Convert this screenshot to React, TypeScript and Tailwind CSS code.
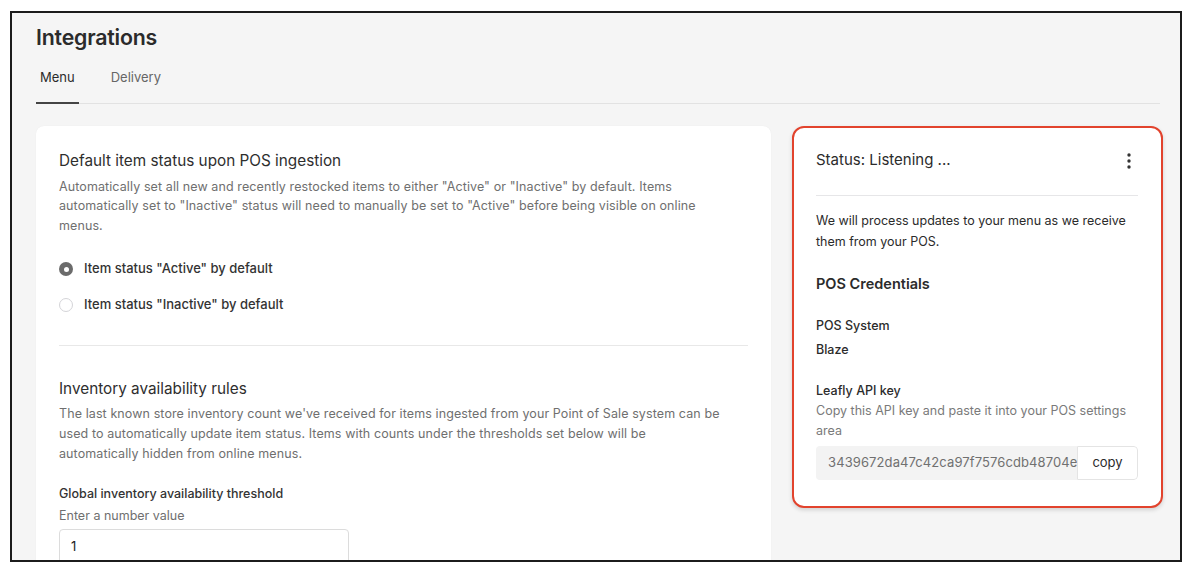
import React from "react";

const font = { fontFamily: "Inter, 'Liberation Sans', sans-serif" };

function Radio({ checked, label }: { checked: boolean; label: string }) {
  return (
    <div className="flex items-center gap-[11px] h-[20px]">
      {checked ? (
        <span className="w-[14px] h-[14px] rounded-full bg-[#6b6b6b] flex items-center justify-center">
          <span className="w-[5px] h-[5px] rounded-full bg-white" />
        </span>
      ) : (
        <span className="w-[14px] h-[14px] rounded-full border border-[#d4d4d8] bg-white" />
      )}
      <span className="text-[13px] font-medium text-[#333]">{label}</span>
    </div>
  );
}

export default function App() {
  return (
    <div className="w-[1190px] h-[574px] bg-white pt-[11px] pl-[10px]" style={font}>
      <div className="w-[1172px] h-[551px] border-2 border-[#1c1c1c] bg-[#f5f5f5] overflow-hidden pl-[24px] pr-[15px]">
        <h1 className="text-[21.3px] font-semibold text-[#2b2b2b] pt-[9px] leading-[30px] tracking-[-0.2px]">Integrations</h1>
        <div className="flex border-b border-[#e2e2e2] mt-[16px] text-[13px] mr-[5px]">
          <div className="px-[4px] pb-[14px] border-b-2 border-[#444] -mb-px text-[#2b2b2b]">Menu</div>
          <div className="pl-[32px] pb-[14px] text-[#666]">Delivery</div>
        </div>
        <div className="flex gap-[21px] mt-[22px] items-start">
          <div className="w-[735px] shrink-0 bg-white rounded-[8px] shadow-[0_0_1px_rgba(0,0,0,0.08)] px-[23px] pt-[23px] h-[500px]">
            <h2 className="text-[15.3px] text-[#2e2e2e] leading-[24px]">Default item status upon POS ingestion</h2>
            <p className="text-[12.5px] text-[#6f6f6f] leading-[19.5px] mt-[4px] tracking-[0.1px] max-w-[665px]">
              Automatically set all new and recently restocked items to either "Active" or "Inactive" by default. Items automatically set to "Inactive" status will need to manually be set to "Active" before being visible on online menus.
            </p>
            <div className="flex flex-col gap-[16px] mt-[24px]">
              <Radio checked label={'Item status "Active" by default'} />
              <Radio checked={false} label={'Item status "Inactive" by default'} />
            </div>
            <div className="border-t border-[#e8e8e8] mt-[30px]" />
            <h2 className="text-[15.3px] text-[#2e2e2e] leading-[24px] mt-[31px]">Inventory availability rules</h2>
            <p className="text-[12.5px] text-[#6f6f6f] leading-[20px] mt-[3px] tracking-[0.1px] max-w-[665px]">
              The last known store inventory count we've received for items ingested from your Point of Sale system can be used to automatically update item status. Items with counts under the thresholds set below will be automatically hidden from online menus.
            </p>
            <div className="text-[12.5px] font-medium text-[#333] mt-[20px] leading-[20px]">Global inventory availability threshold</div>
            <div className="text-[12.5px] text-[#6f6f6f] leading-[20px] mt-[2px]">Enter a number value</div>
            <div className="w-[290px] h-[36px] mt-[3px] border border-[#dcdcdc] rounded-[4px] px-[11px] flex items-center text-[13px] text-[#222]">1</div>
          </div>
          <div className="w-[371px] shrink-0 bg-white rounded-[12px] border-2 border-[#e2432d] shadow-[0_2px_4px_rgba(0,0,0,0.15)] pl-[22px] pr-[23px] pt-[22px] pb-[26px]">
            <div className="flex items-center justify-between h-[22px]">
              <span className="text-[15px] text-[#2b2b2b]">Status: Listening ...</span>
              <svg width="4" height="16" viewBox="0 0 4 16" className="mr-[7px]">
                <circle cx="2" cy="2" r="1.7" fill="#333" />
                <circle cx="2" cy="8" r="1.7" fill="#333" />
                <circle cx="2" cy="14" r="1.7" fill="#333" />
              </svg>
            </div>
            <div className="border-t border-[#e6e6e8] mt-[23px]" />
            <p className="text-[12.5px] text-[#2b2b2b] leading-[21px] mt-[14px]">We will process updates to your menu as we receive them from your POS.</p>
            <div className="text-[14.5px] font-semibold text-[#2b2b2b] mt-[21px] leading-[22px]">POS Credentials</div>
            <div className="text-[12.5px] font-medium text-[#2b2b2b] mt-[21px] leading-[20px]">POS System</div>
            <div className="text-[12.5px] font-medium text-[#2b2b2b] mt-[4px] leading-[20px]">Blaze</div>
            <div className="text-[12.5px] font-medium text-[#2b2b2b] mt-[21px] leading-[20px]">Leafly API key</div>
            <p className="text-[12.5px] text-[#7a7a7a] leading-[20px]">Copy this API key and paste it into your POS settings area</p>
            <div className="flex mt-[5px] h-[34px] rounded-[4px] overflow-hidden">
              <div className="flex-1 min-w-0 bg-[#f3f3f3] pl-[12px] flex items-center text-[13px] text-[#707070] overflow-hidden whitespace-nowrap tracking-[0.1px]">3439672da47c42ca97f7576cdb48704e7</div>
              <div className="w-[61px] shrink-0 border border-[#e4e4e4] rounded-r-[4px] bg-white flex items-center justify-center text-[13px] text-[#2b2b2b]">copy</div>
            </div>
          </div>
        </div>
      </div>
    </div>
  );
}
